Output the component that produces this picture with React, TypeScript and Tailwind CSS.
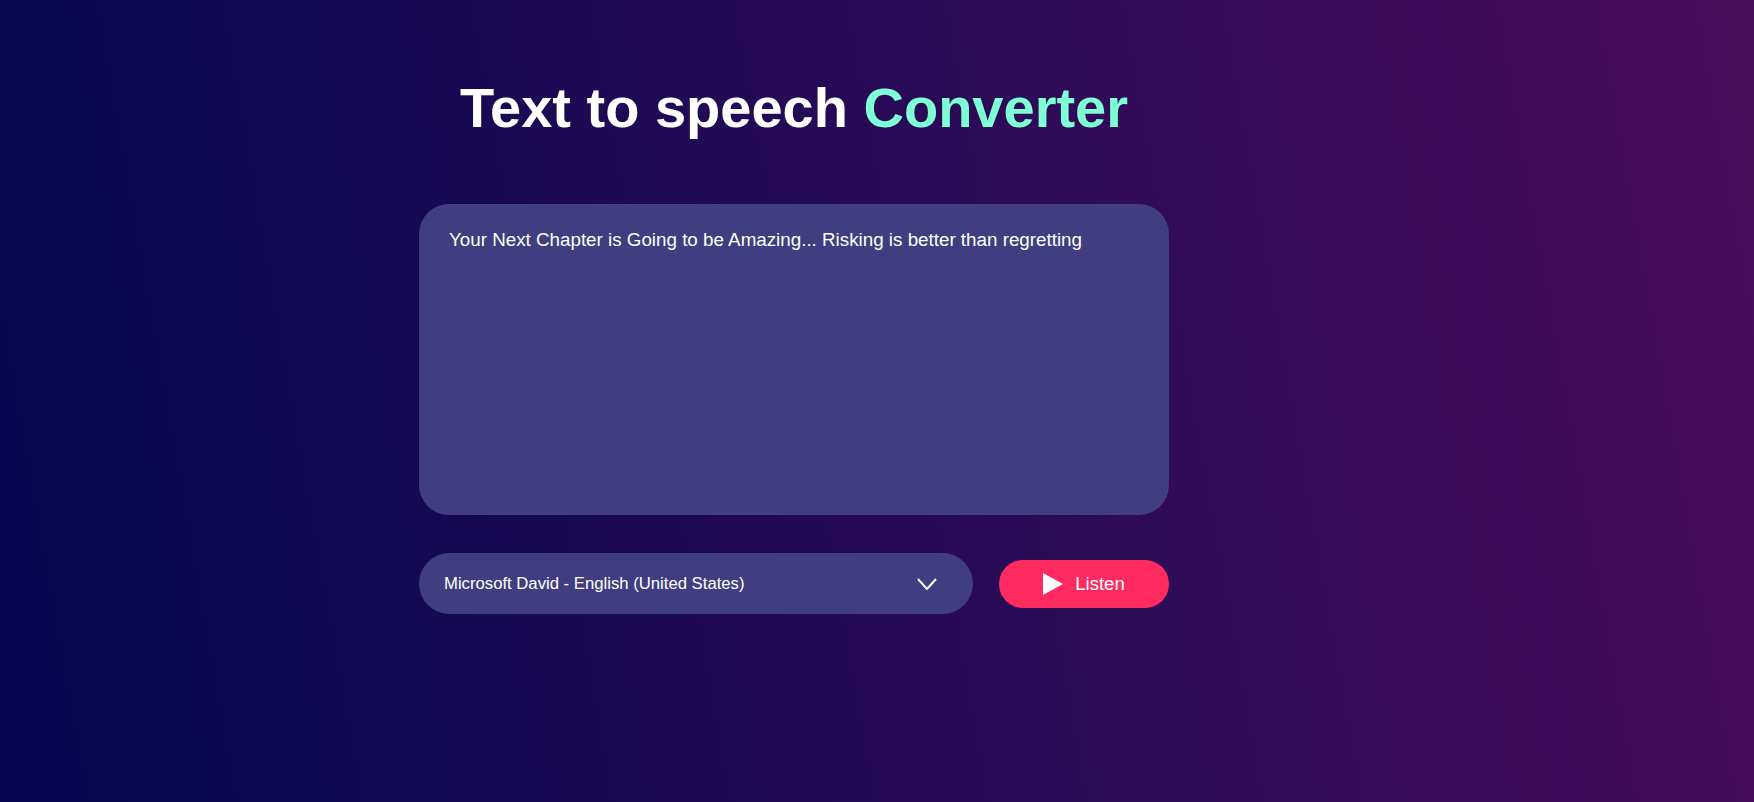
export default function App() {
  return (
    <div className="min-h-[802px] w-full bg-linear-[80deg] from-[#02074f] to-[#4a0d5c] font-['Liberation_Sans',Arial,sans-serif] text-white">
      <div className="ml-[419px] flex w-[750px] flex-col pt-[74px]">
        <h1 className="text-center text-[56px] font-bold leading-[68px]">
          Text to speech <span className="text-[#7fffd4]">Converter</span>
        </h1>
        <div className="mt-[62px] h-[311px] rounded-[30px] bg-[#413d81] px-[30px] py-[24px]">
          <p className="text-[18.8px] leading-[24px]">
            Your Next Chapter is Going to be Amazing... Risking is better than regretting
          </p>
        </div>
        <div className="mt-[38px] flex items-center justify-between">
          <div className="flex h-[61px] w-[554px] items-center justify-between rounded-full bg-[#413d81] pl-[25px] pr-[36px]">
            <span className="text-[16.7px]">Microsoft David - English (United States)</span>
            <svg width="20" height="12" viewBox="0 0 20 12" fill="none" stroke="white" strokeWidth="2">
              <path d="M1 1 L10 11 L19 1" />
            </svg>
          </div>
          <button className="flex h-[48px] w-[170px] items-center justify-center gap-[12px] rounded-full bg-[#ff2a5f]">
            <svg width="20" height="22" viewBox="0 0 20 22" fill="white">
              <path d="M0 0 L20 11 L0 22 Z" />
            </svg>
            <span className="text-[18.5px]">Listen</span>
          </button>
        </div>
      </div>
    </div>
  );
}
